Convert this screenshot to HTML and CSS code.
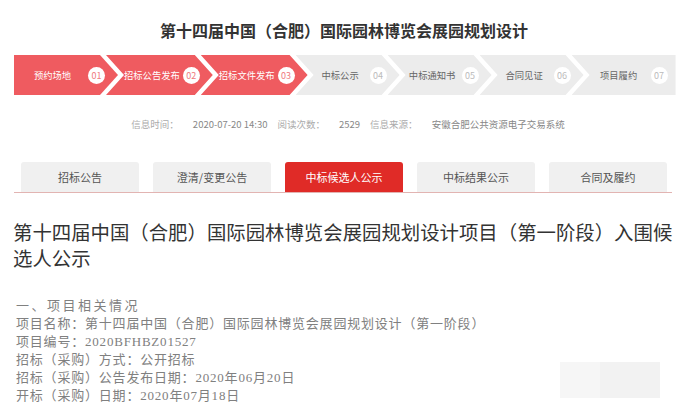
FILE: index.html
```html
<!DOCTYPE html>
<html lang="zh-CN">
<head>
<meta charset="utf-8">
<title>第十四届中国（合肥）国际园林博览会展园规划设计</title>
<link rel="stylesheet" href="styles.css">
</head>
<body>
<div class="page">
  <h1 class="site-title">第十四届中国（合肥）国际园林博览会展园规划设计</h1>

  <ol class="steps">
    <li class="step done first"><span class="step-name">预约场地</span><span class="step-no">01</span></li>
    <li class="step done"><span class="step-name">招标公告发布</span><span class="step-no">02</span></li>
    <li class="step done"><span class="step-name">招标文件发布</span><span class="step-no">03</span></li>
    <li class="step"><span class="step-name">中标公示</span><span class="step-no">04</span></li>
    <li class="step"><span class="step-name">中标通知书</span><span class="step-no">05</span></li>
    <li class="step"><span class="step-name">合同见证</span><span class="step-no">06</span></li>
    <li class="step last"><span class="step-name">项目履约</span><span class="step-no">07</span></li>
  </ol>

  <div class="meta">
    <span class="meta-label">信息时间：</span><span class="meta-value">2020-07-20 14:30</span>
    <span class="meta-label">阅读次数：</span><span class="meta-value">2529</span>
    <span class="meta-label">信息来源：</span><span class="meta-value">安徽合肥公共资源电子交易系统</span>
  </div>

  <nav class="tabs">
    <a class="tab">招标公告</a>
    <a class="tab">澄清/变更公告</a>
    <a class="tab active">中标候选人公示</a>
    <a class="tab">中标结果公示</a>
    <a class="tab">合同及履约</a>
  </nav>

  <h2 class="article-title">第十四届中国（合肥）国际园林博览会展园规划设计项目（第一阶段）入围候选人公示</h2>

  <div class="content">
    <p class="content-head">一、项目相关情况</p>
    <p>项目名称：第十四届中国（合肥）国际园林博览会展园规划设计（第一阶段）</p>
    <p>项目编号：2020BFHBZ01527</p>
    <p>招标（采购）方式：公开招标</p>
    <p>招标（采购）公告发布日期：2020年06月20日</p>
    <p>开标（采购）日期：2020年07月18日</p>
  </div>

  <div class="smudge"><span class="smudge-a"></span><span class="smudge-b"></span></div>
</div>
</body>
</html>
```
FILE: styles.css
```css
html, body {
  margin: 0;
  padding: 0;
  background: #ffffff;
}

.page {
  position: relative;
  width: 688px;
  height: 418px;
  overflow: hidden;
  font-family: "Noto Sans CJK SC", "Noto Sans", sans-serif;
  color: #333;
}

.site-title {
  margin: 20px 0 0;
  font-size: 16px;
  line-height: 20px;
  font-weight: bold;
  text-align: center;
  color: #333;
}

/* steps */
.steps {
  list-style: none;
  margin: 15px 0 0 14px;
  padding: 0;
  display: flex;
  width: 655px;
}

.step {
  flex: 0 0 104px;
  height: 40px;
  margin-left: -12px;
  padding: 0 13px 0 18px;
  box-sizing: border-box;
  display: flex;
  align-items: center;
  background: #ececec;
  color: #666;
  font-size: 9.3px;
  clip-path: polygon(0 0, calc(100% - 18px) 0, 100% 50%, calc(100% - 18px) 100%, 0 100%, 18px 50%);
}

.step.first {
  margin-left: 0;
  padding-left: 6px;
  clip-path: polygon(0 0, calc(100% - 18px) 0, 100% 50%, calc(100% - 18px) 100%, 0 100%);
}

.step.last {
  padding-right: 8px;
  clip-path: polygon(0 0, 100% 0, 100% 100%, 0 100%, 18px 50%);
}

.step.done {
  background: #ef5b60;
  color: #fff;
}

.step-name {
  flex: 1;
  text-align: center;
  white-space: nowrap;
}

.step-no {
  flex: 0 0 17px;
  height: 17px;
  margin-left: 3px;
  border-radius: 50%;
  background: #fff;
  color: #bbb;
  font-size: 9px;
  line-height: 17px;
  text-align: center;
}

.step.done .step-no {
  color: #ef7a7e;
}

/* meta */
.meta {
  margin-top: 23px;
  display: flex;
  justify-content: center;
  align-items: center;
  font-size: 9.5px;
  line-height: 12px;
  padding-left: 8px;
}

.meta-label {
  color: #aaa;
  margin-right: 14px;
}

.meta-value {
  color: #888;
  margin-right: 10px;
}

.meta-value:last-child {
  margin-right: 0;
}

/* tabs */
.tabs {
  margin: 32px 16px 0 14px;
  padding-left: 7px;
  display: flex;
  gap: 14px;
  border-bottom: 1px solid #e2b4b2;
}

.tab {
  flex: 0 0 118px;
  height: 30px;
  line-height: 30px;
  text-align: center;
  font-size: 11px;
  color: #555;
  background: #f0f0f0;
  border-radius: 3px 3px 0 0;
}

.tab.active {
  background: #e02b27;
  color: #fff;
}

/* article */
.article-title {
  margin: 26px 8px 0 13px;
  font-size: 19.4px;
  line-height: 26px;
  font-weight: normal;
  color: #333;
}

.content {
  margin: 26px 0 0 16px;
  font-family: "Liberation Serif", "Noto Sans CJK SC", serif;
  font-size: 13px;
  letter-spacing: 0.8px;
  line-height: 18px;
  color: #808080;
}

.content p {
  margin: 0;
  white-space: nowrap;
}

.content .content-head {
  letter-spacing: 2.5px;
}

.smudge {
  position: absolute;
  left: 560px;
  top: 362px;
  width: 100px;
  height: 36px;
  display: flex;
}

.smudge-a {
  flex: 0 0 40px;
  background: #f6f6f6;
}

.smudge-b {
  flex: 1;
  background: #f2f2f2;
}
```
